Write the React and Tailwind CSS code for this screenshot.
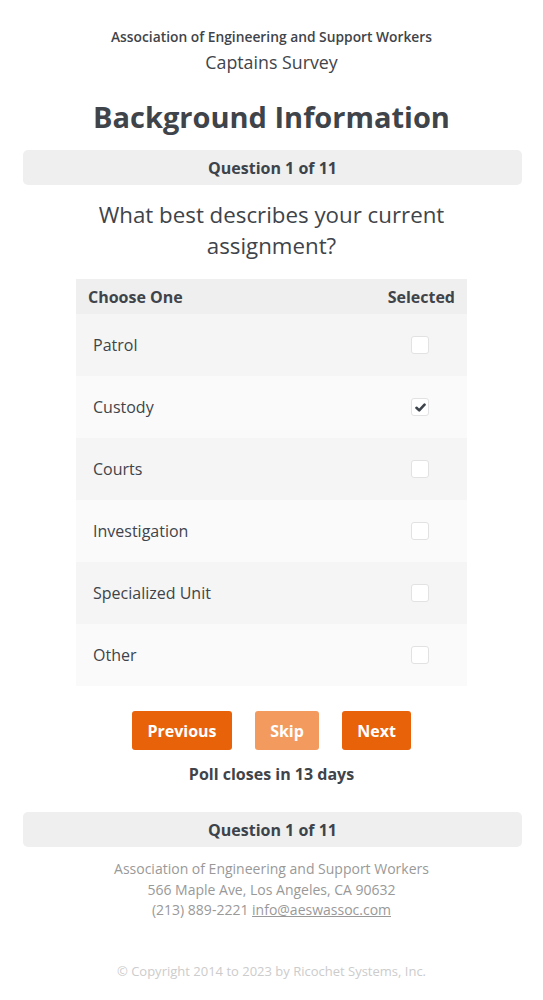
import { useState } from "react";

const OPTIONS = ["Patrol", "Custody", "Courts", "Investigation", "Specialized Unit", "Other"];

const CheckBox = ({ checked, onClick }) => (
  <button
    onClick={onClick}
    className="flex h-[18px] w-[18px] items-center justify-center rounded-[3px] border border-[#e2e2e2] bg-white"
  >
    {checked && (
      <svg viewBox="0 0 12 12" className="h-[11px] w-[11px]">
        <path d="M1.6 6.3 L4.6 9.1 L10.4 2.9" fill="none" stroke="#3d434a" strokeWidth="2.8" strokeLinecap="round" strokeLinejoin="round" />
      </svg>
    )}
  </button>
);

const QuestionBar = () => (
  <div className="ml-[23px] mr-[21px] flex h-[35px] items-center justify-center rounded-[5px] bg-[#efefef] text-[16px] font-bold text-[#3d434a]">
    Question 1 of 11
  </div>
);

export default function App() {
  const [selected, setSelected] = useState("Custody");

  return (
    <div className="min-h-[1000px] bg-white font-['Open_Sans',sans-serif] text-[#3f444a]">
      <div className="pt-[27px] text-center">
        <div className="text-[13.8px] font-semibold leading-[20px]">Association of Engineering and Support Workers</div>
        <div className="mt-[3px] text-[17.8px] font-medium leading-[24px]">Captains Survey</div>
        <h1 className="mt-[23px] text-[29px] font-bold leading-[40px]">Background Information</h1>
      </div>
      <div className="mt-[13px]">
        <QuestionBar />
      </div>
      <div className="mx-auto mt-[14px] w-[440px] text-center text-[22.3px] leading-[31px]">
        What best describes your current assignment?
      </div>
      <div className="mx-auto mt-[18px] w-[391px]">
        <div className="flex h-[35px] items-center justify-between bg-[#efefef] px-[12px] text-[16px] font-bold">
          <span>Choose One</span>
          <span>Selected</span>
        </div>
        {OPTIONS.map((opt, i) => (
          <div
            key={opt}
            className={`flex h-[62px] items-center justify-between pl-[17px] pr-[38px] text-[16px] ${i % 2 === 0 ? "bg-[#f5f5f5]" : "bg-[#fafafa]"}`}
          >
            <span>{opt}</span>
            <CheckBox checked={selected === opt} onClick={() => setSelected(opt)} />
          </div>
        ))}
      </div>
      <div className="mt-[25px] flex justify-center gap-[23px]">
        <button className="h-[39px] w-[100px] rounded-[3px] bg-[#e8620a] text-[16px] font-bold text-white">Previous</button>
        <button className="h-[39px] w-[64px] rounded-[3px] bg-[#f39b5f] text-[16px] font-bold text-white">Skip</button>
        <button className="h-[39px] w-[69px] rounded-[3px] bg-[#e8620a] text-[16px] font-bold text-white">Next</button>
      </div>
      <div className="mt-[13px] text-center text-[16px] font-bold leading-[22px]">Poll closes in 13 days</div>
      <div className="mt-[27px]">
        <QuestionBar />
      </div>
      <div className="mt-[12px] text-center text-[14px] leading-[20.5px] text-[#999999]">
        <div>Association of Engineering and Support Workers</div>
        <div>566 Maple Ave, Los Angeles, CA 90632</div>
        <div>
          (213) 889-2221 <a href="#" className="underline">info@aeswassoc.com</a>
        </div>
      </div>
      <div className="mt-[41px] pb-[20px] text-center text-[13px] leading-[18px] text-[#cccccc]">
        © Copyright 2014 to 2023 by Ricochet Systems, Inc.
      </div>
    </div>
  );
}
